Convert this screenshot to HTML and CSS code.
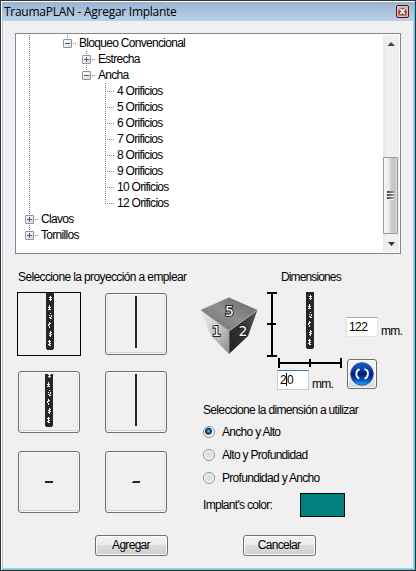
FILE: index.html
```html
<!DOCTYPE html>
<html lang="es">
<head>
<meta charset="utf-8">
<title>TraumaPLAN - Agregar Implante</title>
<link rel="stylesheet" href="styles.css">
</head>
<body>
<svg class="defs" width="0" height="0" aria-hidden="true">
  <symbol id="plate" viewBox="0 0 8 57">
    <path d="M0 0H8V56H7V57H1V56H0Z" fill="#262626"/>
    <path fill="#f4f4f4" d="M4 3h1v1h1v1h-1v1h1v1h-1v1h-1v-1h-1v-1h1v-1h-1v-1h1z M3 12h1v2h1v1h-1v1h1v1h-3v-1h1v-1h-1v-1h1z M4 20h1v1h-1z M3 22h1v1h-1z M5 22h1v2h-1v1h1v1h-2v-1h-1v-1h2z M3 29h1v1h1v1h-1v1h-1v1h1v2h-1v-2h-1v-2h1z M4 30h1v1h-1z M4 38h1v1h1v1h-1v1h1v1h-1v2h-1v-1h-1v-1h1v-1h-1v-1h1z M3 47h1v1h1v1h-1v1h1v1h-1v1h1v1h-2v-1h-1v-1h1v-2h-1v-1h1z"/>
  </symbol>
</svg>
<div class="window">
  <header class="titlebar">
    <h1>TraumaPLAN - Agregar Implante</h1>
    <button class="close" aria-label="Cerrar"><svg width="11" height="11" viewBox="0 0 11 11"><path d="M3.200 3 7.800 8M7.800 3 3.200 8" stroke="#454753" stroke-width="4"/><path d="M3.400 3.200 7.600 7.800M7.600 3.200 3.400 7.800" stroke="#fff" stroke-width="1.800"/></svg></button>
  </header>

  <div class="treebox">
    <ul class="tree">
      <li><i class="g v"></i><i class="g"></i><i class="g up node"><b></b></i><span>Bloqueo Convencional</span></li>
      <li><i class="g v"></i><i class="g"></i><i class="g"></i><i class="g v node plus"><b></b></i><span>Estrecha</span></li>
      <li><i class="g v"></i><i class="g"></i><i class="g"></i><i class="g up node"><b></b></i><span>Ancha</span></li>
      <li><i class="g v"></i><i class="g"></i><i class="g"></i><i class="g"></i><i class="g v tee"></i><span>4 Orificios</span></li>
      <li><i class="g v"></i><i class="g"></i><i class="g"></i><i class="g"></i><i class="g v tee"></i><span>5 Orificios</span></li>
      <li><i class="g v"></i><i class="g"></i><i class="g"></i><i class="g"></i><i class="g v tee"></i><span>6 Orificios</span></li>
      <li><i class="g v"></i><i class="g"></i><i class="g"></i><i class="g"></i><i class="g v tee"></i><span>7 Orificios</span></li>
      <li><i class="g v"></i><i class="g"></i><i class="g"></i><i class="g"></i><i class="g v tee"></i><span>8 Orificios</span></li>
      <li><i class="g v"></i><i class="g"></i><i class="g"></i><i class="g"></i><i class="g v tee"></i><span>9 Orificios</span></li>
      <li><i class="g v"></i><i class="g"></i><i class="g"></i><i class="g"></i><i class="g v tee"></i><span>10 Orificios</span></li>
      <li><i class="g v"></i><i class="g"></i><i class="g"></i><i class="g"></i><i class="g up tee"></i><span>12 Orificios</span></li>
      <li><i class="g v node plus"><b></b></i><span>Clavos</span></li>
      <li><i class="g up node plus"><b></b></i><span>Tornillos</span></li>
    </ul>
    <div class="scrollbar">
      <svg width="16" height="17" viewBox="0 0 16 17"><path d="M4.500 11 8 7l4 4z" fill="#444"/></svg>
      <div class="thumb"><i></i><i></i><i></i></div>
      <svg width="16" height="17" viewBox="0 0 16 17"><path d="M5 7h7L8.500 11z" fill="#333"/></svg>
    </div>
  </div>

  <div class="panels">
    <section class="left">
      <h2>Seleccione la proyección a emplear</h2>
      <div class="views">
        <button class="view picked"><svg width="62" height="62"><use href="#plate" x="28" y="0" width="8" height="57"/></svg></button>
        <button class="view"><svg width="60" height="60"><path d="M29 2h2v52h-2z" fill="#262626"/></svg></button>
        <button class="view"><svg width="60" height="60" viewBox="0 0 60 60"><svg x="26" y="2" width="8" height="53"><use href="#plate" x="0" y="-4" width="8" height="57"/></svg></svg></button>
        <button class="view"><svg width="60" height="60"><path d="M29 2h2v52h-2z" fill="#262626"/></svg></button>
        <button class="view"><svg width="60" height="60"><path d="M26 29h8v2h-8z" fill="#262626"/></svg></button>
        <button class="view"><svg width="60" height="60"><path d="M27 29h7v2h-8v-1h1z" fill="#262626"/></svg></button>
      </div>
    </section>

    <section class="right">
      <h2 class="dim-title">Dimensiones</h2>
      <div class="dim-top">
        <svg class="cube" width="58" height="58" viewBox="0 0 58 58">
          <defs>
            <linearGradient id="ct" x1="0" y1="1" x2="1" y2="0"><stop offset="0" stop-color="#6c6c6c"/><stop offset=".5" stop-color="#8e8e8e"/><stop offset="1" stop-color="#666"/></linearGradient>
            <linearGradient id="cl" x1="0" y1="0" x2="1" y2="1"><stop offset="0" stop-color="#efefef"/><stop offset=".55" stop-color="#c4c4c4"/><stop offset="1" stop-color="#8c8c8c"/></linearGradient>
            <linearGradient id="cr" x1="0" y1="1" x2="1" y2="0"><stop offset="0" stop-color="#222"/><stop offset=".6" stop-color="#363636"/><stop offset="1" stop-color="#5c5c5c"/></linearGradient>
          </defs>
          <path d="M.5 13 29 34V57L11 39z" fill="url(#cl)"/>
          <path d="M57.500 13 29 34V57L48 39z" fill="url(#cr)"/>
          <path d="M29 .5 57.500 13 29 34 .5 13z" fill="url(#ct)"/>
          <path d="M.5 13 29 34 57.500 13" fill="none" stroke="#b5b5b5" stroke-width=".8"/>
          <path d="M29 34V57" stroke="#a2a2a2" stroke-width=".8"/>
          <g class="digits"><text x="25" y="19">5</text><text x="12" y="39">1</text><text x="38.500" y="38.500">2</text></g>
        </svg>
        <svg class="vruler" width="11" height="65"><path d="M1 1h10M1 32h9M1 64h10M6 0v64" stroke="#000" stroke-width="2"/></svg>
        <svg class="plate" width="8" height="57"><use href="#plate" width="8" height="57"/></svg>
        <div class="field high"><span class="box">122</span><span class="unit">mm.</span></div>
      </div>
      <div class="dim-bottom">
        <div class="wide">
          <svg width="66" height="12"><path d="M2 1v10M33 2v8M64 1v10M2 6h62" stroke="#000" stroke-width="2"/></svg>
          <div class="field"><span class="box focus">2<i class="caret"></i>0</span><span class="unit">mm.</span></div>
        </div>
        <button class="refresh" aria-label="Actualizar">
          <svg width="24" height="24" viewBox="0 0 24 24">
            <defs><linearGradient id="bl" x1="0" y1="0" x2="0" y2="1"><stop offset="0" stop-color="#1762d6"/><stop offset=".25" stop-color="#0b47b0"/><stop offset=".5" stop-color="#041c78"/><stop offset=".72" stop-color="#0640b2"/><stop offset="1" stop-color="#14b4fa"/></linearGradient></defs>
            <circle cx="12" cy="12" r="11.300" fill="url(#bl)" stroke="#1b3f96" stroke-width=".8"/>
            <path d="M9.500 7.200Q5.500 9 6.500 13.500 7.100 15.800 9.200 16.500M14.500 7.200Q18.500 8.300 17.900 12.500 17.200 15.800 14.500 16.700" fill="none" stroke="#fff" stroke-width="1.900"/>
          </svg>
        </button>
      </div>
      <h2 class="use-title">Seleccione la dimensión a utilizar</h2>
      <div class="radios">
        <div class="opt"><i class="radio on"></i><span>Ancho y Alto</span></div>
        <div class="opt"><i class="radio"></i><span>Alto y Profundidad</span></div>
        <div class="opt"><i class="radio"></i><span>Profundidad y Ancho</span></div>
      </div>
      <div class="color"><span>Implant's color:</span><i class="swatch"></i></div>
    </section>
  </div>

  <footer class="actions">
    <button class="btn">Agregar</button>
    <button class="btn">Cancelar</button>
  </footer>
</div>
</body>
</html>
```
FILE: styles.css
```css
* { box-sizing: border-box; }
html, body { margin: 0; }
body { overflow: hidden; }
body, button {
  font: 12px/16px "Liberation Sans", Arial, sans-serif;
  letter-spacing: -0.7px;
  color: #000;
}
button { padding: 0; margin: 0; }
svg { display: block; flex: none; }
.defs { display: none; }
i { font-style: normal; }
h1, h2 { margin: 0; font-weight: normal; font-size: inherit; white-space: nowrap; }

.window {
  width: 416px;
  height: 571px;
  display: flex;
  flex-direction: column;
  background: #f0f0f0;
  border: 1px solid #343434;
  box-shadow: inset 1px 1px 0 #fff, inset -1px -1px 0 #48cdf5, inset 2px 0 0 #b3cde8, inset -2px -2px 0 #b3cde8;
}
.titlebar {
  flex: none;
  height: 19px;
  margin: 1px 1px 0 1px;
  padding: 0 5px 0 2px;
  display: flex;
  align-items: center;
  justify-content: space-between;
  background: linear-gradient(#9ab4d2, #b9d1ea);
}
.titlebar h1 {
  font: 12px/18px "Open Sans", "Noto Sans", sans-serif;
  letter-spacing: -0.27px;
}
.close {
  width: 13px;
  height: 13px;
  border: 1px solid #4c1620;
  border-radius: 2px;
  background: linear-gradient(#e3a99e 0 45%, #c2503f 50%, #d98577);
  box-shadow: inset 0 0 0 1px #ecc0b8;
  display: flex;
  align-items: center;
  justify-content: center;
}

.treebox {
  flex: none;
  width: 386px;
  height: 221px;
  margin: 12px 0 0 14px;
  padding: 1px 1px 1px 4px;
  border: 1px solid #828790;
  background: #fff;
  display: flex;
  justify-content: space-between;
}
.tree { list-style: none; margin: 0; padding: 0; }
.tree li { display: flex; height: 16px; white-space: nowrap; }
.tree span { padding-left: 2px; }
.g {
  flex: none;
  width: 19px;
  height: 16px;
  display: flex;
  align-items: center;
  justify-content: center;
  background-repeat: no-repeat;
  --dots-v: repeating-linear-gradient(to bottom, #808080 0 1px, transparent 1px 2px);
  --dots-h: repeating-linear-gradient(to right, #808080 0 1px, transparent 1px 2px);
}
.v { background-image: var(--dots-v); background-size: 1px 16px; background-position: 9px 0; }
.up { background-image: var(--dots-v); background-size: 1px 8px; background-position: 9px 0; }
.v.tee, .v.node { background-image: var(--dots-v), var(--dots-h); background-size: 1px 16px, 9px 1px; background-position: 9px 0, 9px 8px; }
.up.tee, .up.node { background-image: var(--dots-v), var(--dots-h); background-size: 1px 9px, 9px 1px; background-position: 9px 0, 9px 8px; }
.node b {
  width: 9px;
  height: 9px;
  margin-top: 1px;
  border: 1px solid #929292;
  border-radius: 1px;
  background: linear-gradient(#3c5a9c, #3c5a9c) center / 5px 1px no-repeat, linear-gradient(135deg, #fff, #dcdcdc);
}
.plus b {
  background: linear-gradient(#3c5a9c, #3c5a9c) center / 5px 1px no-repeat, linear-gradient(#3c5a9c, #3c5a9c) center / 1px 5px no-repeat, linear-gradient(135deg, #fff, #dcdcdc);
}

.scrollbar {
  width: 16px;
  height: 217px;
  background: linear-gradient(to right, #e6e6e6, #f0f0f0 20% 85%, #e6e6e6 95%, #fff);
  display: flex;
  flex-direction: column;
}
.thumb {
  width: 15px;
  height: 77px;
  margin: 105px 0 1px;
  border: 1px solid #979797;
  border-radius: 1px;
  background: linear-gradient(to right, #f7f7f7 0, #e4e4e4 45%, #cfcfd2 50%, #c3c3c6 85%, #e4e4e4);
  display: flex;
  flex-direction: column;
  align-items: center;
  justify-content: center;
}
.thumb i { width: 7px; height: 3px; background: linear-gradient(to right, #444, #999); border-bottom: 1px solid #f2f2f2; }

.panels { flex: none; height: 281px; padding: 13px 0 0 16px; display: flex; }
.left { width: 183px; }
.left h2 { height: 20px; line-height: 20px; padding-left: 1px; letter-spacing: -0.62px; }
.views {
  display: grid;
  grid-template-columns: 64px 64px;
  grid-template-rows: 64px 62px 62px;
  column-gap: 23px;
  row-gap: 15px;
  padding-top: 5px;
  justify-items: center;
  align-items: center;
}
.views .view:nth-child(n+5) { margin-top: 6px; }
.view {
  width: 62px;
  height: 62px;
  border: 1px solid #707070;
  border-radius: 3px;
  background: #f0f0f0;
  box-shadow: inset 0 0 0 1px #f8f8f8, inset 0 -2px 0 #d2d2d2, inset -2px 0 0 #e2e2e2, inset 2px 0 0 #e2e2e2;
}
.view.picked { width: 64px; height: 64px; border-color: #000; border-radius: 0; box-shadow: none; }

.right { flex: 1; }
.dim-title { height: 20px; line-height: 20px; padding-left: 81px; letter-spacing: -0.87px; }
.dim-top { display: flex; height: 70px; padding-top: 5px; }
.cube { margin-top: 5px; }
.digits { font: 14px "DejaVu Sans", sans-serif; fill: #fff; stroke: #222; stroke-width: 2px; paint-order: stroke; letter-spacing: 0; }
.vruler { margin-left: 8px; }
.plate { margin-left: 29px; }
.field { display: flex; align-items: flex-start; height: 20px; }
.field.high { margin: 25px 0 0 32px; }
.box {
  width: 32px;
  height: 20px;
  padding-left: 2px;
  line-height: 18px;
  border: 1px solid #e2e3ea;
  border-top-color: #abadb3;
  background: #fff;
  display: flex;
  letter-spacing: -0.6px;
}
.box.focus { border-color: #b5cfe7; border-top-color: #3d7bad; }
.caret { width: 1px; height: 13px; margin: 2px 0 0 0; background: #000; }
.unit { margin: 6px 0 0 3px; line-height: 16px; letter-spacing: -0.7px; }
.dim-bottom { display: flex; padding-left: 77px; height: 33px; }
.wide { width: 70px; }
.wide .field { margin-top: 1px; }
.refresh {
  width: 30px;
  height: 30px;
  margin-top: 2px;
  border: 1px solid #707070;
  border-radius: 3px;
  background: linear-gradient(#f2f2f2 50%, #d8d8d8);
  box-shadow: inset 0 0 0 1px #fafafa;
  display: flex;
  align-items: center;
  justify-content: center;
}
.use-title { margin-top: 12px; padding-left: 3px; height: 16px; letter-spacing: -0.66px; }
.radios { padding: 2px 0 0 3px; }
.opt { height: 23px; display: flex; align-items: center; gap: 7px; }
.radio {
  width: 12px;
  height: 12px;
  border: 1px solid #8e8f8f;
  border-radius: 50%;
  background: radial-gradient(circle, #dedede 0 40%, #f6f6f6 60%);
}
.radio.on { background: radial-gradient(circle at 45% 42%, #8fd8f8 0, #1c6ea4 18%, #0b2f52 38%, #f4f4f4 50%); }
.color { display: flex; align-items: center; height: 24px; margin-top: 4px; padding-left: 3px; }
.color span { width: 97px; }
.swatch { width: 45px; height: 24px; border: 1px solid #000; background: #008080; }

.actions { display: flex; gap: 75px; padding-left: 94px; }
.btn {
  width: 73px;
  height: 21px;
  padding-right: 1px;
  border: 1px solid #707070;
  border-radius: 3px;
  background: linear-gradient(#f2f2f2 0, #ebebeb 48%, #dcdcdc 50%, #cfcfcf);
  box-shadow: inset 0 0 0 1px #fafafa;
  line-height: 19px;
}
```
